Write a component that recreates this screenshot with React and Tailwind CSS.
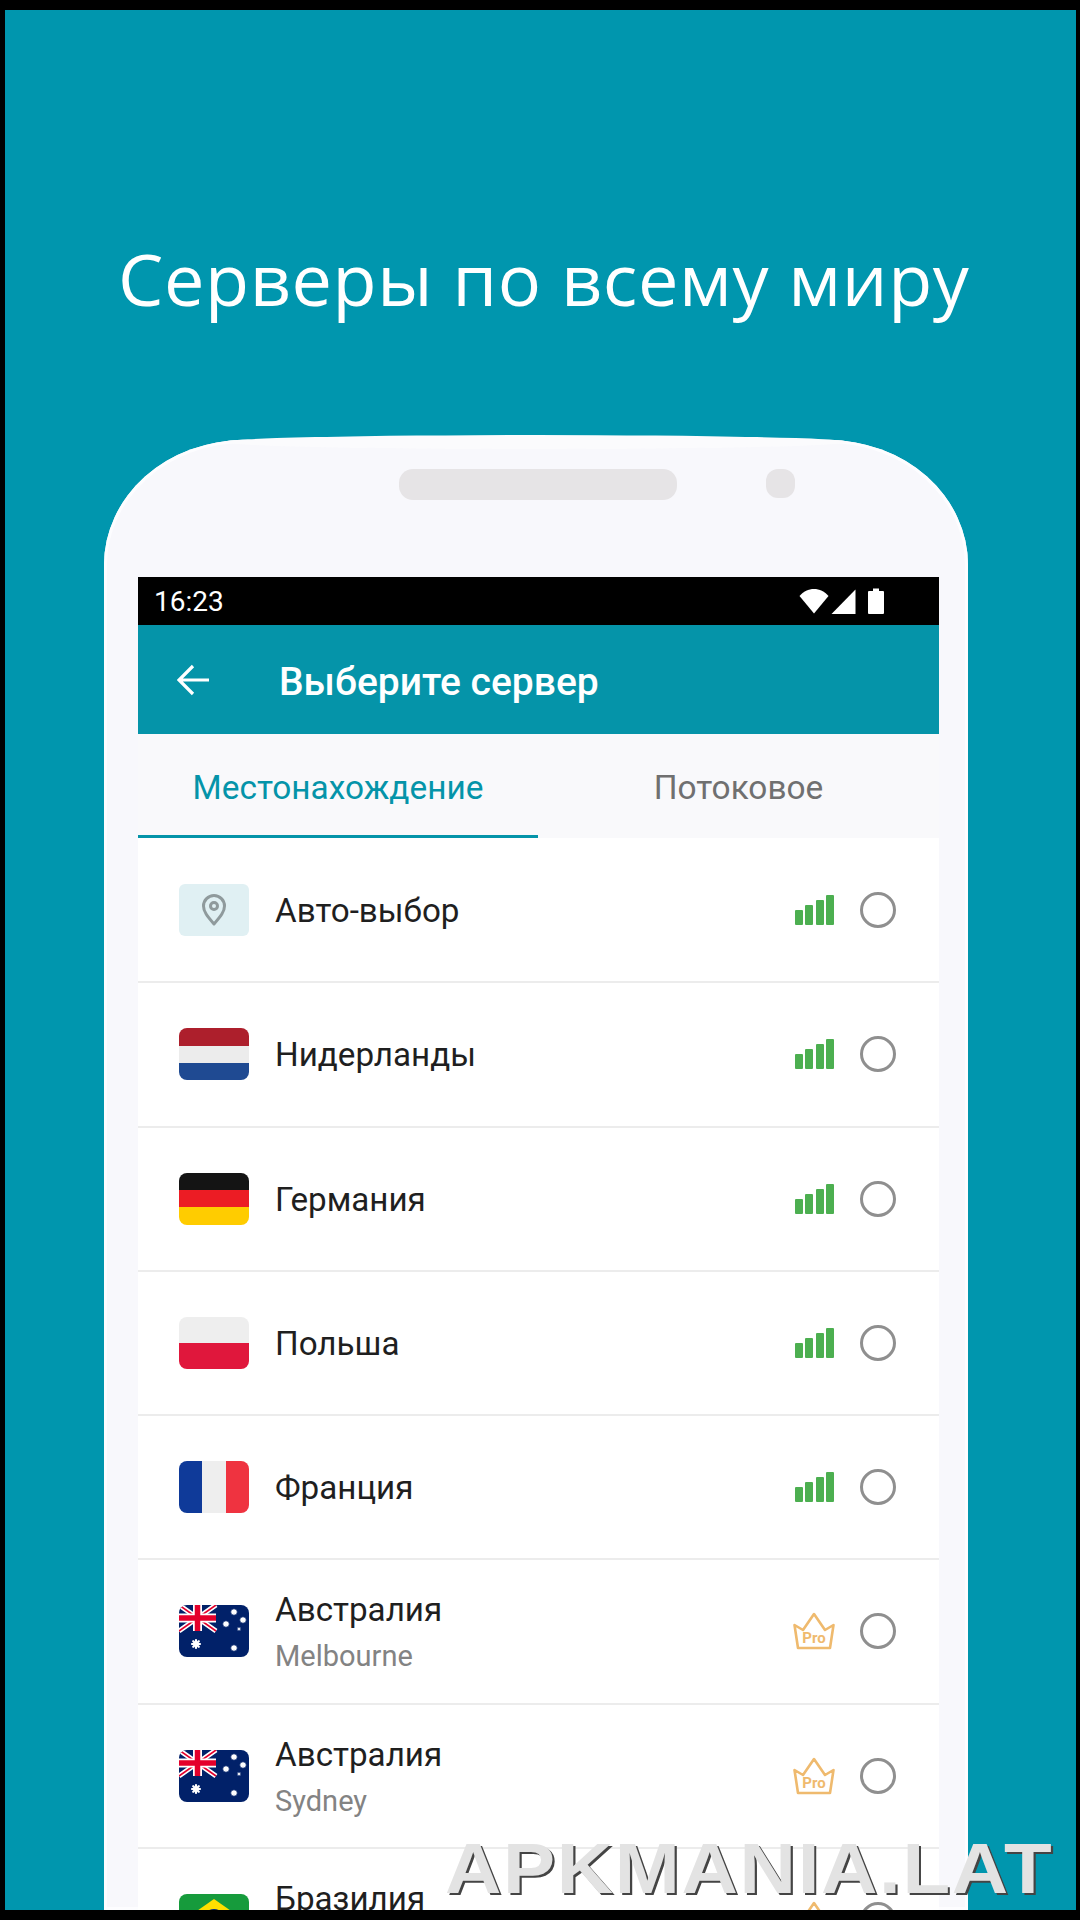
import React from 'react';

// полоски для простых флагов
const Stripes = ({ colors, vertical }) => (
    <div className={`w-[70px] h-[52px] rounded-[8px] overflow-hidden flex shrink-0 ${vertical ? 'flex-row' : 'flex-col'}`}>
        {colors.map((c, i) => (
            <div key={i} className="flex-1" style={{ backgroundColor: c }}></div>
        ))}
    </div>
);

const AutoIcon = () => (
    <div className="w-[70px] h-[52px] rounded-[6px] bg-[#e0f0f3] flex items-center justify-center shrink-0">
        <svg width="26" height="32" viewBox="0 0 26 32" fill="none" stroke="#8f9a9c" strokeWidth="3">
            <path d="M13 30 C 6 22 2.5 17.5 2.5 12 A 10.5 10.5 0 0 1 23.5 12 C 23.5 17.5 20 22 13 30 Z" strokeLinejoin="round" />
            <circle cx="13" cy="12" r="3.5" />
        </svg>
    </div>
);

const Star = ({ x, y, r }) => (
    <g stroke="#fff" strokeWidth={r * 0.55} strokeLinecap="round">
        <path d={`M${x - r} ${y}H${x + r}M${x} ${y - r}V${y + r}M${x - r * 0.7} ${y - r * 0.7}L${x + r * 0.7} ${y + r * 0.7}M${x - r * 0.7} ${y + r * 0.7}L${x + r * 0.7} ${y - r * 0.7}`} />
    </g>
);

const AustraliaFlag = () => (
    <svg width="70" height="52" viewBox="0 0 70 52" className="rounded-[8px] shrink-0">
        <rect width="70" height="52" fill="#012169" />
        <path d="M0 0L37 26M37 0L0 26" stroke="#fff" strokeWidth="5" />
        <path d="M0 0L37 26M37 0L0 26" stroke="#e4002b" strokeWidth="1.6" />
        <path d="M18.5 0V26M0 13H37" stroke="#fff" strokeWidth="9" />
        <path d="M18.5 0V26M0 13H37" stroke="#e4002b" strokeWidth="5.5" />
        <Star x={17} y={39} r={4} />
        <Star x={55} y={43} r={2.6} />
        <Star x={55} y={7} r={2.6} />
        <Star x={47} y={19} r={2.6} />
        <Star x={64} y={15} r={2.6} />
        <Star x={60} y={24} r={1.4} />
    </svg>
);

const BrazilFlag = () => (
    <svg width="70" height="52" viewBox="0 0 70 52" className="rounded-[8px] shrink-0">
        <rect width="70" height="52" fill="#169b3c" />
        <path d="M35 5L65 26L35 47L5 26Z" fill="#fedf00" />
        <circle cx="35" cy="26" r="11" fill="#002776" />
    </svg>
);

const SignalBars = () => (
    <div className="w-[40px] h-[30px] flex items-end justify-between shrink-0">
        <div className="w-[8px] h-[15px] rounded-[1px] bg-[#4caf50]"></div>
        <div className="w-[8px] h-[20px] rounded-[1px] bg-[#4caf50]"></div>
        <div className="w-[8px] h-[25px] rounded-[1px] bg-[#4caf50]"></div>
        <div className="w-[8px] h-[30px] rounded-[1px] bg-[#4caf50]"></div>
    </div>
);

const ProCrown = () => (
    <svg width="42" height="38" viewBox="0 0 42 38" fill="none" className="shrink-0">
        <path d="M1.5 13 L10 18 L21 2 L32 18 L40.5 13 L37 36 H5 Z" stroke="#efba6e" strokeWidth="2.6" strokeLinejoin="round" />
        <text x="21" y="31" textAnchor="middle" fontSize="15" fontWeight="700" fill="#efba6e" fontFamily="Roboto, sans-serif">Pro</text>
    </svg>
);

const servers = [
    { name: 'Авто-выбор', flag: <AutoIcon /> },
    { name: 'Нидерланды', flag: <Stripes colors={['#ad1f2c', '#ececec', '#1f4a92']} /> },
    { name: 'Германия', flag: <Stripes colors={['#141414', '#ec1c24', '#ffcc00']} /> },
    { name: 'Польша', flag: <Stripes colors={['#eeeeee', '#e0173c']} /> },
    { name: 'Франция', flag: <Stripes colors={['#0f3a99', '#eeeeee', '#ef3340']} vertical /> },
    { name: 'Австралия', sub: 'Melbourne', flag: <AustraliaFlag />, pro: true },
    { name: 'Австралия', sub: 'Sydney', flag: <AustraliaFlag />, pro: true },
    { name: 'Бразилия', sub: ' ', flag: <BrazilFlag />, pro: true },
];

const ServerRow = ({ server }) => (
    <div className="h-[144.25px] shrink-0 border-b-2 border-[#ececec] pl-[41px] pr-[43.5px] flex items-center">
        {server.flag}
        <div className="ml-[26px] flex-1 pt-[2px] flex flex-col">
            <span className="text-[33.2px] leading-[44px] text-[#1f1f1f]">{server.name}</span>
            {server.sub && (
                <span className="text-[29px] leading-[40px] h-[40px] mt-[4px] text-[#838383]">{server.sub}</span>
            )}
        </div>
        {server.pro ? <ProCrown /> : <SignalBars />}
        <div className="ml-[25px] w-[36px] h-[36px] rounded-full border-[3px] border-[#8f8f8f] shrink-0"></div>
    </div>
);

const App = () => {
    return (
        <div className="relative w-[1080px] h-[1920px] bg-black pt-[10px] pb-[10px] pl-[5px] pr-[4px] overflow-hidden font-['Roboto',sans-serif]">
            <div className="h-full bg-[#0096ae] overflow-hidden flex flex-col">
                <h1 className="pl-[113px] pt-[223px] h-[425px] shrink-0 text-[72px] leading-[90px] tracking-[0.6px] text-white font-['Open_Sans',sans-serif]">
                    Серверы по всему миру
                </h1>

                <div className="relative ml-[99px] w-[864px] flex-1 min-h-0 flex">
                    {/* верх корпуса чуть выпуклый */}
                    <div className="absolute top-0 left-[120px] w-[624px] h-[14px] rounded-[50%] bg-[#fbfbfd]"></div>

                    <div className="mt-[5px] w-full bg-[#f8f8fc] rounded-t-[140px_125px] shadow-[inset_0_0_0_3px_#fdfdff] flex flex-col overflow-hidden">
                        <div className="h-[137px] shrink-0 pt-[29px] pl-[295px] flex items-start">
                            <div className="w-[278px] h-[31px] rounded-[14px] bg-[#e6e4e6]"></div>
                            <div className="ml-[89px] w-[29px] h-[29px] rounded-[12px] bg-[#e6e4e6]"></div>
                        </div>

                        <div className="ml-[34px] w-[801px] flex-1 min-h-0 bg-white flex flex-col overflow-hidden">
                            <div className="h-[48px] shrink-0 bg-black text-white pl-[16px] pr-[55px] flex items-center justify-between">
                                <span className="text-[28px] pt-[1px]">16:23</span>
                                <div className="flex items-center">
                                    <svg width="30" height="26" viewBox="0 0 30 26" fill="#fff">
                                        <path d="M15 25.5 L0.5 8 C 8 -1.5 22 -1.5 29.5 8 Z" />
                                    </svg>
                                    <svg width="25" height="25" viewBox="0 0 25 25" fill="#fff" className="ml-[2px]">
                                        <path d="M24.5 0.5 V25 H0.5 Z" />
                                    </svg>
                                    <svg width="16" height="26" viewBox="0 0 16 26" fill="#fff" className="ml-[12px]">
                                        <path d="M5 0.5 H11 V3 H15 A1 1 0 0 1 16 4 V25 A1 1 0 0 1 15 26 H1 A1 1 0 0 1 0 25 V4 A1 1 0 0 1 1 3 H5 Z" />
                                    </svg>
                                </div>
                            </div>

                            <div className="h-[109px] shrink-0 bg-[#0594a9] text-white pl-[39px] flex items-center">
                                <svg width="32" height="32" viewBox="0 0 32 32" fill="none" stroke="#fff" strokeWidth="3.2">
                                    <path d="M32 16 H2 M16 2 L2 16 L16 30" />
                                </svg>
                                <span className="ml-[70px] text-[39px] font-medium pt-[6px]">Выберите сервер</span>
                            </div>

                            <div className="h-[104px] shrink-0 bg-[#f9f9fb] flex text-[33.4px]">
                                <div className="w-[400px] border-b-[3px] border-[#0594a9] text-[#0594a9] flex items-center justify-center pt-[8px]">
                                    Местонахождение
                                </div>
                                <div className="flex-1 text-[#707070] flex items-center justify-center pt-[5px]">
                                    Потоковое
                                </div>
                            </div>

                            <div className="flex-1 min-h-0 pt-[1px] overflow-hidden flex flex-col">
                                {servers.map((s, i) => (
                                    <ServerRow key={i} server={s} />
                                ))}
                            </div>
                        </div>
                    </div>
                </div>
            </div>

            {/* водяной знак поверх всего */}
            <span className="absolute left-[445px] top-[1833px] origin-left scale-x-[1.1] text-[71px] leading-[72px] font-bold tracking-[1.5px] text-[#e3e3e3] [text-shadow:2px_2px_0_#444] font-['Liberation_Sans',sans-serif]">
                APKMANIA.LAT
            </span>
        </div>
    );
};

export default App;
